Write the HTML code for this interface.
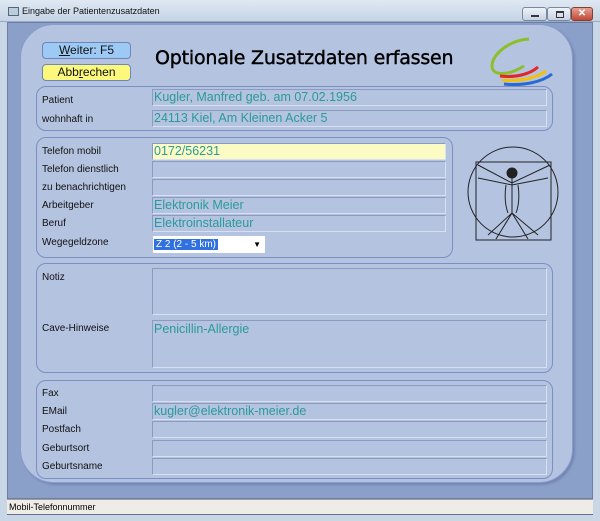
<!DOCTYPE html>
<html><head><meta charset="utf-8"><style>
*{margin:0;padding:0;box-sizing:border-box}
body{width:600px;height:521px;overflow:hidden;background:#c9d6e6;font-family:"Liberation Sans",Arial,sans-serif;position:relative}
.abs{position:absolute}
.title{left:0;top:0;width:600px;height:22px;background:linear-gradient(#dfe8f2,#c5d4e6);border-bottom:1px solid #9aaac0}
.client{left:7px;top:22px;width:586px;height:477px;background:#8aa0c8;border:1px solid #6a7ea8}
.panel{left:20px;top:24px;width:553px;height:459px;background:#b4c3e0;border-radius:34px;border:1px solid #8a9ccb;box-shadow:2px 2px 2px #7486b4}
.grp{position:absolute;border:1px solid #7b8fc4;border-radius:10px}
.lbl{position:absolute;font-size:10px;color:#111}
.fld{position:absolute;height:17px;border-top:1px solid #8a9ac0;border-left:1px solid #8a9ac0;border-bottom:1px solid #d8e0f0;border-right:1px solid #d8e0f0;font-size:12.5px;color:#2a9a9a;padding-left:1px;line-height:15px;white-space:nowrap;overflow:hidden}
.btn{position:absolute;left:42px;width:89px;height:17px;border:1px solid #6e86b8;border-radius:4px;font-size:12px;text-align:center;line-height:15px;color:#111}
.status{left:7px;top:499px;width:586px;height:16px;background:#efebe7;border-top:1px solid #a0a0a0;border-bottom:1px solid #607090;font-size:9px;line-height:15px;padding-left:2px}
.wb{position:absolute;top:7px;height:14px;border:1px solid #7888a0;border-radius:3px;background:linear-gradient(#eef2f8,#c8d2e0)}
</style></head><body>
<div class="abs title">
 <div class="abs" style="left:8px;top:7px;width:11px;height:9px;border:1px solid #567;background:#bcd"></div>
 <div class="abs" style="left:22px;top:6px;font-size:9px;color:#111">Eingabe der Patientenzusatzdaten</div>
 <div class="wb" style="left:522px;width:25px"><div class="abs" style="left:8px;top:7px;width:8px;height:2px;background:#334"></div></div>
 <div class="wb" style="left:547px;width:24px"><div class="abs" style="left:8px;top:3px;width:8px;height:7px;border:1px solid #334;border-top-width:2px"></div></div>
 <div class="wb" style="left:571px;width:22px;background:linear-gradient(#e8a090,#c0483a);border-color:#804030;color:#fff;font-size:10px;text-align:center;line-height:12px;font-weight:bold">✕</div>
</div>
<div class="abs client"></div>
<div class="abs panel"></div>

<div class="btn" style="top:42px;background:#9ccaf4"><u>W</u>eiter: F5</div>
<div class="btn" style="top:64px;background:#fbf87c">Abb<u>r</u>echen</div>
<div class="abs" style="left:155px;top:47px;font-family:'DejaVu Sans',sans-serif;font-size:19px;color:#000;letter-spacing:-0.2px;-webkit-text-stroke:0.4px #000">Optionale Zusatzdaten erfassen</div>
<svg class="abs" style="left:488px;top:36px" width="68" height="52" viewBox="0 0 68 52">
 <path d="M41 3 C22 4 4 18 4 30 C4 40 20 40 36 30" fill="none" stroke="#8cbf2a" stroke-width="3"/>
 <path d="M12 40 C28 42 42 38 50 31" fill="none" stroke="#e02828" stroke-width="3"/>
 <path d="M14 44 C32 46 48 42 58 35" fill="none" stroke="#f2c010" stroke-width="3"/>
 <path d="M16 48 C36 50 54 46 64 38" fill="none" stroke="#2a6ad0" stroke-width="3"/>
</svg>

<div class="grp" style="left:36px;top:86px;width:517px;height:45px"></div>
<div class="lbl" style="left:42px;top:95px">Patient</div>
<div class="lbl" style="left:42px;top:114px">wohnhaft in</div>
<div class="fld" style="left:152px;top:89px;width:395px">Kugler, Manfred geb. am 07.02.1956</div>
<div class="fld" style="left:152px;top:110px;width:395px">24113 Kiel, Am Kleinen Acker 5</div>

<div class="grp" style="left:36px;top:137px;width:417px;height:121px"></div>
<div class="lbl" style="left:42px;top:146px">Telefon mobil</div>
<div class="lbl" style="left:42px;top:164px">Telefon dienstlich</div>
<div class="lbl" style="left:42px;top:182px">zu benachrichtigen</div>
<div class="lbl" style="left:42px;top:200px">Arbeitgeber</div>
<div class="lbl" style="left:42px;top:218px">Beruf</div>
<div class="lbl" style="left:42px;top:237px">Wegegeldzone</div>
<div class="fld" style="left:152px;top:143px;width:294px;background:#fdfbc4">0172/56231</div>
<div class="fld" style="left:152px;top:161px;width:294px"></div>
<div class="fld" style="left:152px;top:179px;width:294px"></div>
<div class="fld" style="left:152px;top:197px;width:294px">Elektronik Meier</div>
<div class="fld" style="left:152px;top:215px;width:294px">Elektroinstallateur</div>
<div class="abs" style="left:153px;top:236px;width:112px;height:17px;background:#fff;font-size:10px;line-height:17px">
 <span style="background:#3070e0;color:#fff;padding:0 2px;margin-left:1px">Z 2 (2 - 5 km)</span>
 <span style="position:absolute;right:4px;top:0;font-size:8px">▼</span></div>

<svg class="abs" style="left:466px;top:143px" width="96" height="100" viewBox="0 0 96 100">
 <g fill="none" stroke="#222" stroke-width="1">
 <circle cx="47" cy="49" r="45"/>
 <rect x="10" y="19" width="75" height="78"/>
 <circle cx="46" cy="30" r="5" fill="#222"/>
 <path d="M46 35 L46 70 M12 22 L46 40 L84 22 M12 35 L46 42 L82 35 M46 70 L30 96 M46 70 L62 96 M46 70 L22 92 M46 70 L72 92 M40 42 C38 55 40 65 42 70 M52 42 C54 55 52 65 50 70"/>
 </g>
</svg>

<div class="grp" style="left:36px;top:263px;width:517px;height:110px"></div>
<div class="lbl" style="left:42px;top:272px">Notiz</div>
<div class="lbl" style="left:42px;top:323px">Cave-Hinweise</div>
<div class="fld" style="left:152px;top:268px;width:395px;height:47px"></div>
<div class="fld" style="left:152px;top:320px;width:395px;height:48px;line-height:16px">Penicillin-Allergie</div>

<div class="grp" style="left:36px;top:380px;width:517px;height:99px"></div>
<div class="lbl" style="left:42px;top:388px">Fax</div>
<div class="lbl" style="left:42px;top:406px">EMail</div>
<div class="lbl" style="left:42px;top:424px">Postfach</div>
<div class="lbl" style="left:42px;top:443px">Geburtsort</div>
<div class="lbl" style="left:42px;top:461px">Geburtsname</div>
<div class="fld" style="left:152px;top:385px;width:395px"></div>
<div class="fld" style="left:152px;top:403px;width:395px">kugler@elektronik-meier.de</div>
<div class="fld" style="left:152px;top:421px;width:395px"></div>
<div class="fld" style="left:152px;top:440px;width:395px"></div>
<div class="fld" style="left:152px;top:458px;width:395px"></div>

<div class="abs status">Mobil-Telefonnummer</div>
</body></html>
